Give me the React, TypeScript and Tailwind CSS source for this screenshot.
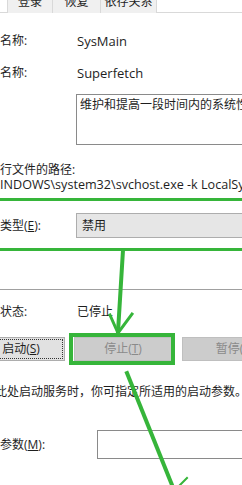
import React from "react";

const font = {
  fontFamily: '"Open Sans", "Noto Sans CJK SC", sans-serif',
};

function Tab({ label, w }: { label: string; w: string }) {
  return (
    <div
      className={`${w} h-[13px] border-r border-[#d9d9d9] bg-[#f0f0f0] overflow-hidden flex justify-center`}
    >
      <span className="block -mt-[6px] leading-4 text-[12px]">{label}</span>
    </div>
  );
}

function Btn({
  children,
  className,
}: {
  children: React.ReactNode;
  className: string;
}) {
  return (
    <div
      className={`h-[24px] shrink-0 border flex items-center justify-center text-[12px] ${className}`}
    >
      {children}
    </div>
  );
}

export default function App() {
  return (
    <div
      className="relative w-[242px] h-[485px] overflow-hidden bg-white text-[#1e1e1e] text-[12px]"
      style={font}
    >
      {/* Tabs */}
      <div className="flex pl-[7px] h-[13px] border-b border-[#d9d9d9]">
        <div className="flex border-l border-[#d9d9d9]">
          <Tab label="登录" w="w-[45px]" />
          <Tab label="恢复" w="w-[48px]" />
          <Tab label="依存关系" w="w-[56px]" />
        </div>
      </div>

      {/* Names */}
      <div className="mt-[20px] h-4 leading-4 flex">
        <span className="w-[77px] shrink-0">名称:</span>
        <span className="text-[13px]">SysMain</span>
      </div>
      <div className="mt-[16px] h-4 leading-4 flex">
        <span className="w-[77px] shrink-0">名称:</span>
        <span className="text-[13px]">Superfetch</span>
      </div>

      {/* Description */}
      <div className="mt-[13px] ml-[76px] h-[51px] w-[200px] border border-[#8a8a8a] px-[3px] pt-[2px] leading-4 whitespace-nowrap overflow-hidden">
        维护和提高一段时间内的系统性能。
      </div>

      {/* Path */}
      <div className="mt-[18px] h-[14px] leading-[14px] whitespace-nowrap">
        行文件的路径:
      </div>
      <div className="h-[15px] leading-[15px] whitespace-nowrap text-[12.6px]">
        INDOWS\system32\svchost.exe -k LocalSystemNetworkRestricted
      </div>

      {/* Startup type */}
      <div className="mt-[21px] flex items-center h-[25px]">
        <span className="w-[76px] shrink-0">
          类型(<span className="underline">E</span>):
        </span>
        <div className="h-[25px] w-[200px] shrink-0 bg-[#e6e6e6] border border-[#adadad] flex items-center pl-[5px]">
          禁用
        </div>
      </div>

      {/* Separator */}
      <div className="mt-[51px] h-px bg-[#a0a0a0]" />

      {/* Status */}
      <div className="mt-[14px] h-4 leading-4 flex">
        <span className="w-[77px] shrink-0">状态:</span>
        <span>已停止</span>
      </div>

      {/* Buttons */}
      <div className="mt-[17px] flex">
        <Btn className="w-[88px] -ml-[23px] bg-[#e1e1e1] border-[#adadad] outline-1 outline-dotted outline-[#333] -outline-offset-[3px]">
          <span>
            启动(<span className="underline">S</span>)
          </span>
        </Btn>
        <Btn className="ml-[9px] w-[98px] bg-[#cccccc] border-[#bfbfbf] text-[#8a8a8a]">
          <span>
            停止(<span className="underline">T</span>)
          </span>
        </Btn>
        <Btn className="ml-[10px] w-[106px] bg-[#cccccc] border-[#bfbfbf] text-[#8a8a8a]">
          <span>
            暂停(<span className="underline">P</span>)
          </span>
        </Btn>
      </div>

      {/* Hint */}
      <div className="mt-[23px] h-4 leading-4 whitespace-nowrap -ml-[5px]">
        此处启动服务时，你可指定所适用的启动参数。
      </div>

      {/* Params */}
      <div className="mt-[30px] flex items-center h-[29px]">
        <span className="w-[97px] shrink-0">
          参数(<span className="underline">M</span>):
        </span>
        <div className="h-[29px] w-[200px] shrink-0 bg-white border border-[#8a8a8a]" />
      </div>

      {/* Annotations */}
      <svg
        className="absolute inset-0 pointer-events-none"
        width="242"
        height="485"
        viewBox="0 0 242 485"
      >
        <g stroke="#36b53a" fill="none" strokeLinecap="square">
          <line x1="0" y1="199.5" x2="242" y2="199.5" strokeWidth="3" />
          <line x1="0" y1="249.5" x2="242" y2="249.5" strokeWidth="3" />
          <line x1="123" y1="250" x2="118" y2="332" strokeWidth="4" />
          <polyline
            points="110,315 118,333 132,314"
            strokeWidth="3"
            strokeLinejoin="miter"
          />
          <rect x="71" y="335" width="102" height="28" strokeWidth="4" />
          <line x1="127" y1="373" x2="172" y2="485" strokeWidth="4" />
          <line x1="180" y1="485" x2="187" y2="478" strokeWidth="2" />
        </g>
      </svg>
    </div>
  );
}
